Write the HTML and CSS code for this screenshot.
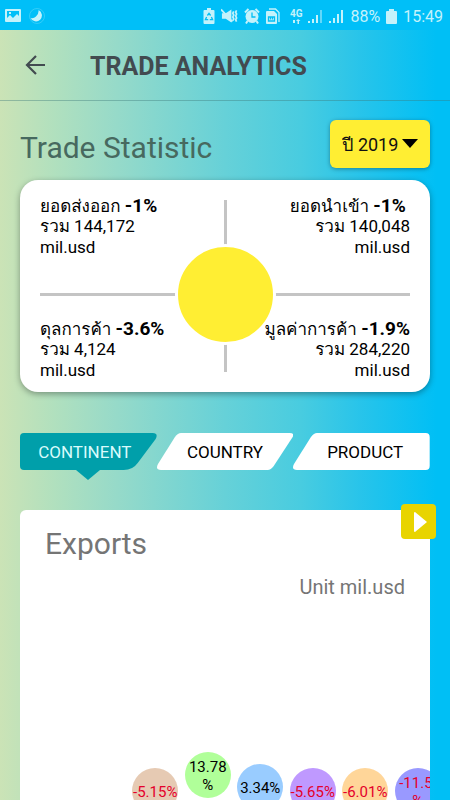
FILE: index.html
```html
<!DOCTYPE html>
<html lang="th">
<head>
<meta charset="utf-8">
<meta name="viewport" content="width=device-width, initial-scale=1">
<title>Trade Analytics</title>
<link rel="stylesheet" href="styles.css">
</head>
<body>
<div class="statusbar">
  <div class="status-group">
    <svg width="16" height="16" viewBox="0 0 16 16"><path fill="currentColor" fill-rule="evenodd" d="M1 1h14q1 0 1 1v11q0 1-1 1H1q-1 0-1-1V2q0-1 1-1zM2 3v7l3-3 3 3 4-4 2 2V3zM4 4h2v2H4z"/></svg>
    <svg class="moon" width="18" height="18" viewBox="0 0 18 18"><circle cx="9" cy="9" r="7.500" fill="none" stroke="currentColor" stroke-opacity=".25"/><path fill="currentColor" d="M10.500 3a6 6 0 1 1-8 8q3 1 5.500-1.500Q11 7 10.500 3z"/></svg>
  </div>
  <div class="status-group status-right">
    <svg width="12" height="16" viewBox="0 0 12 16"><path fill="currentColor" d="M4 0h4v2h2.500q1 0 1 1v12q0 1-1 1h-9q-1 0-1-1V3q0-1 1-1H4z"/><path fill="none" stroke="#00bff5" stroke-width="1.300" d="M4.400 7.500 6 5.300l1.600 2.200M3.600 9l-1.200 2.700h2.800M8.400 9l1.200 2.700H6.800"/></svg>
    <svg width="17" height="16" viewBox="0 0 18 16"><path fill="currentColor" d="M1 5h4l6-4v14l-6-4H1z"/><path fill="none" stroke="currentColor" stroke-width="1.800" d="m0 1 12 13M13.500 3l-1 2 1 2-1 2 1 2-1 2M16.500 2l-1 2 1 2-1 2 1 2-1 2 1 2"/></svg>
    <svg width="16" height="16" viewBox="0 0 16 16"><circle cx="8" cy="8.500" r="6.500" fill="currentColor"/><path fill="none" stroke="currentColor" stroke-width="2" d="M1 4.500 4.500 1M15 4.500 11.500 1M3.500 13 2 15.500M12.500 13l1.500 2.500"/><path fill="none" stroke="#00bff5" stroke-width="1.300" d="M8 4.500V9h3.500"/></svg>
    <svg class="sim" width="14" height="16" viewBox="0 0 14 16"><path fill="none" stroke="currentColor" stroke-width="1.300" d="M3 1h6.500L13 4.500V14"/><path fill="currentColor" d="M1 3h7l3 3v9q0 1-1 1H1q-1 0-1-1V4q0-1 1-1z"/><path fill="none" stroke="#00bff5" stroke-width="1.300" d="M2.500 9h6v4h-6zM4.500 9v2.500M6.500 9v2.500"/></svg>
    <span class="network"><span>4G</span><svg width="9" height="5" viewBox="0 0 9 5"><path fill="currentColor" d="M1 1h2v3H1zM6 0l2.500 2H7v3H5.500V2H4z"/></svg></span>
    <svg width="15" height="14" viewBox="0 0 15 14"><path fill="currentColor" d="M0 12h2v2H0zM4 10h2v4H4zM8 6h2v8H8z"/><path fill="currentColor" opacity=".5" d="M12 1h2v13h-2z"/></svg>
    <svg width="15" height="14" viewBox="0 0 15 14"><path fill="currentColor" d="M0 12h2v2H0zM4 9h2v5H4zM8 5h2v9H8zM12 1h2v13h-2z"/></svg>
    <span>88%</span>
    <svg width="11" height="15" viewBox="0 0 11 15"><path fill="currentColor" d="M3 0h5v2h2q1 0 1 1v11q0 1-1 1H1q-1 0-1-1V3q0-1 1-1h2z"/></svg>
    <span>15:49</span>
  </div>
</div>

<header class="appbar">
  <button class="back" type="button" aria-label="Back">
    <svg width="22" height="20" viewBox="0 0 22 20"><path fill="none" stroke="currentColor" stroke-width="2.200" d="M21 10H3M12 1l-9 9 9 9"/></svg>
  </button>
  <h1>TRADE ANALYTICS</h1>
</header>

<main>
  <div class="heading">
    <h2>Trade Statistic</h2>
    <div class="year">
      <select aria-label="Year"><option>ปี 2019</option></select>
      <svg class="caret" width="16" height="9" viewBox="0 0 16 9"><path d="M0 0h16L8 9z"/></svg>
    </div>
  </div>

  <section class="stats">
    <div class="stat"><p>ยอดส่งออก <b>-1%</b></p><p>รวม 144,172</p><p>mil.usd</p></div>
    <div class="stat right"><p>ยอดนำเข้า <b>-1%</b>&nbsp;</p><p>รวม 140,048</p><p>mil.usd</p></div>
    <div class="stat"><p>ดุลการค้า <b>-3.6%</b></p><p>รวม 4,124</p><p>mil.usd</p></div>
    <div class="stat right"><p>มูลค่าการค้า <b>-1.9%</b></p><p>รวม 284,220</p><p>mil.usd</p></div>
    <div class="hub"></div>
  </section>

  <nav class="tabs">
    <button type="button" class="tab active">
      <svg class="shape" viewBox="0 0 137 37" preserveAspectRatio="none"><path fill="currentColor" d="M4 0H133Q139 0 136 6L118 30Q113 37 104 37H4Q0 37 0 33V4Q0 0 4 0z"/></svg>
      <span>CONTINENT</span>
    </button>
    <button type="button" class="tab">
      <svg class="shape" viewBox="0 0 137 37" preserveAspectRatio="none"><path fill="currentColor" d="M24 0H133Q138 0 136 4L117 33Q114 37 111 37H4Q-2 37 1 31L18 4Q21 0 24 0z"/></svg>
      <span>COUNTRY</span>
    </button>
    <button type="button" class="tab last">
      <svg class="shape" viewBox="0 0 137 37" preserveAspectRatio="none"><path fill="currentColor" d="M24 0H133Q137 0 137 4V33Q137 37 133 37H4Q-2 37 1 31L18 4Q21 0 24 0z"/></svg>
      <span>PRODUCT</span>
    </button>
  </nav>

  <section class="panel">
    <button class="play" type="button" aria-label="Play"><svg width="13" height="20" viewBox="0 0 13 20"><path fill="#fff" d="M1 0 13 10 1 20Q0 20 0 19V1Q0 0 1 0z"/></svg></button>
    <div class="chart">
      <h2>Exports</h2>
      <p class="unit">Unit mil.usd</p>
      <ul class="bubbles">
        <li class="low"><span class="bubble tan down">-5.15%</span></li>
        <li class="high"><span class="bubble green">13.78<br>%</span></li>
        <li class="mid"><span class="bubble blue">3.34%</span></li>
        <li class="low"><span class="bubble violet down">-5.65%</span></li>
        <li class="low"><span class="bubble peach down">-6.01%</span></li>
        <li class="low"><span class="bubble indigo down">-11.5&nbsp;<br>%</span></li>
      </ul>
    </div>
  </section>
</main>
</body>
</html>
```
FILE: styles.css
```css
* {
  box-sizing: border-box;
}

body {
  margin: 0;
  height: 100vh;
  display: flex;
  flex-direction: column;
  overflow: hidden;
  font-family: Roboto, Waree, Loma, Garuda, "Noto Sans", sans-serif;
  font-size: 18px;
  color: #000;
  background: linear-gradient(90deg, #cbe3b6 0%, #b1e0be 12%, #96dac9 26%, #66d1d8 50%, #48cce0 67%, #28c4ea 80%, #00bff5 97%);
}

h1, h2, p, ul {
  margin: 0;
  padding: 0;
}

button {
  border: 0;
  padding: 0;
  background: none;
  font: inherit;
  color: inherit;
}

.statusbar {
  display: flex;
  justify-content: space-between;
  align-items: center;
  height: 30px;
  padding: 2px 7px 0 5px;
  background: #00bff8;
  font-size: 16px;
  color: #c4f2fb;
}

.status-group {
  display: flex;
  align-items: center;
  gap: 5px;
}

.status-right {
  gap: 6px;
}

.moon {
  margin-left: 2px;
}

.sim {
  margin-right: 4px;
}

.network {
  display: flex;
  flex-direction: column;
  align-items: center;
  font-size: 10px;
  line-height: 10px;
  font-weight: 700;
}

.appbar {
  display: flex;
  align-items: center;
  height: 71px;
  padding: 0 24px;
  border-bottom: 1px solid rgba(60, 120, 120, 0.4);
  color: #424b50;
}

.back {
  display: flex;
  width: 66px;
}

.appbar h1 {
  padding-top: 4px;
  font-size: 25px;
  line-height: 30px;
  font-weight: 700;
}

main {
  flex: 1;
  min-height: 0;
  display: flex;
  flex-direction: column;
  padding: 19px 20px 0;
}

.heading {
  display: flex;
  justify-content: space-between;
  align-items: flex-start;
  height: 60px;
}

.heading h2 {
  padding-top: 10px;
  font-size: 30px;
  line-height: 36px;
  font-weight: 400;
  color: #47695f;
}

.year {
  position: relative;
}

.year select {
  appearance: none;
  display: block;
  width: 100px;
  height: 48px;
  padding: 0 12px;
  border: 0;
  border-radius: 6px;
  background: #ffee33;
  box-shadow: 0 1px 4px rgba(0, 0, 0, 0.35);
  font: inherit;
  color: #111;
}

.caret {
  position: absolute;
  right: 12px;
  top: 19px;
  pointer-events: none;
}

.stats {
  position: relative;
  display: grid;
  grid-template-columns: 1fr 1fr;
  row-gap: 60px;
  padding: 15px 20px 11px;
  border-radius: 18px;
  background: #fff;
  box-shadow: 0 2px 6px rgba(0, 0, 0, 0.35);
}

.stats::before,
.stats::after {
  content: "";
  position: absolute;
  background: #c4c4c4;
}

.stats::before {
  left: 20px;
  right: 20px;
  top: 113px;
  height: 3px;
}

.stats::after {
  left: 50%;
  top: 20px;
  bottom: 20px;
  width: 3px;
  margin-left: -1px;
}

.stat {
  position: relative;
  z-index: 2;
  font-size: 17px;
  line-height: 21px;
  white-space: nowrap;
}

.stat p {
  height: 21px;
}

.stat b {
  font-size: 19px;
}

.right {
  justify-self: end;
  text-align: right;
}

.hub {
  position: absolute;
  z-index: 1;
  left: 50%;
  top: 114px;
  width: 101px;
  height: 101px;
  margin: -50px;
  border: 3px solid #fff;
  border-radius: 50%;
  background: #ffee33;
}

.tabs {
  display: grid;
  grid-template-columns: repeat(3, 1fr);
  margin-top: 41px;
  font-size: 17px;
}

.tab {
  position: relative;
  height: 37px;
  color: #fff;
}

.tab span {
  position: relative;
  color: #000;
}

.active {
  padding-right: 7px;
  color: #009faa;
}

.active span {
  color: #d8fbfc;
}

.active::after {
  content: "";
  position: absolute;
  left: 50%;
  top: 100%;
  margin-left: -12px;
  border: solid transparent;
  border-width: 10px 12px 0;
  border-top-color: #009faa;
}

.last {
  padding-left: 7px;
}

.shape {
  position: absolute;
  inset: 0;
  width: 100%;
  height: 100%;
}

.panel {
  position: relative;
  flex: 1;
  min-height: 0;
  display: flex;
  margin-top: 40px;
}

.chart {
  flex: 1;
  min-width: 0;
  padding: 16px 25px 0;
  overflow: hidden;
  border-radius: 6px 6px 0 0;
  background: #fff;
  color: #757575;
}

.chart h2 {
  font-size: 30px;
  line-height: 36px;
  font-weight: 400;
}

.unit {
  margin-top: 12px;
  font-size: 20px;
  line-height: 26px;
  text-align: right;
}

.play {
  position: absolute;
  top: -6px;
  right: -6px;
  display: flex;
  align-items: center;
  justify-content: center;
  width: 35px;
  height: 35px;
  padding-left: 4px;
  border-radius: 4px;
  background: #e8d400;
}

.bubbles {
  display: flex;
  align-items: flex-start;
  margin: 152px -39px 0 84px;
  list-style: none;
}

.bubbles li {
  flex: 1;
  display: flex;
  justify-content: center;
}

.mid {
  padding-top: 12px;
}

.low {
  padding-top: 16px;
}

.bubble {
  flex: none;
  display: flex;
  align-items: center;
  justify-content: center;
  width: 46px;
  height: 46px;
  padding-top: 2px;
  border-radius: 50%;
  font-size: 15px;
  line-height: 18px;
  text-align: center;
  color: #000;
}

.down {
  color: #e4002b;
}

.tan { background: #e6cab3; }
.green { background: #b0ff99; }
.blue { background: #99ccff; }
.violet { background: #bf99ff; }
.peach { background: #ffd699; }
.indigo { background: #9999ff; }
```
